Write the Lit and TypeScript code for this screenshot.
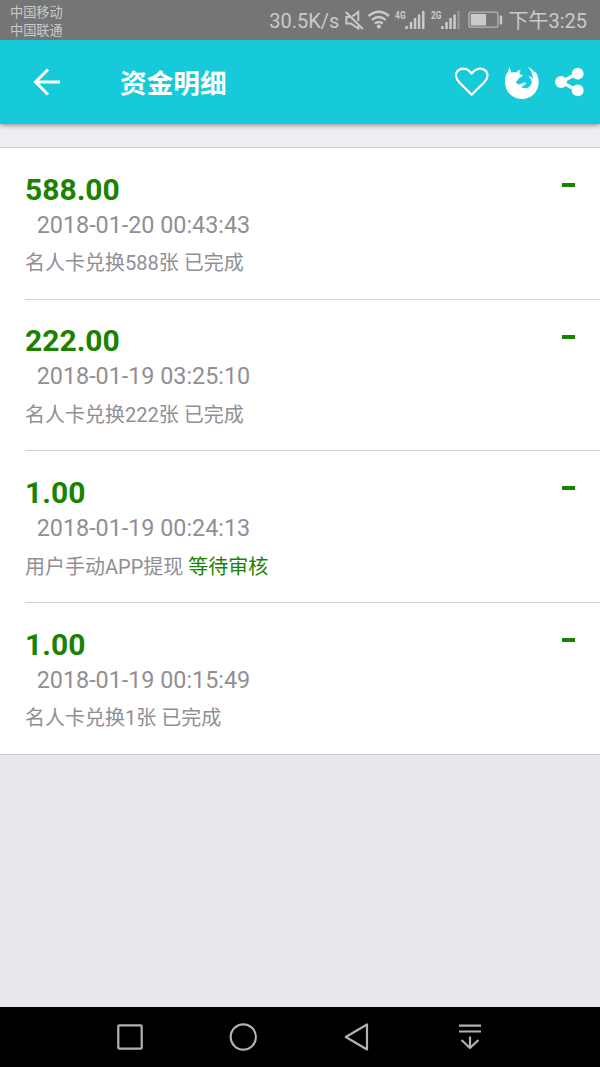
import { LitElement, html, css } from "lit";
import { customElement } from "lit/decorators.js";

interface Entry {
  amount: string;
  time: string;
  detail: string;
  status: string;
  pending?: boolean;
}

const entries: Entry[] = [
  { amount: "588.00", time: "2018-01-20 00:43:43", detail: "名人卡兑换588张", status: "已完成" },
  { amount: "222.00", time: "2018-01-19 03:25:10", detail: "名人卡兑换222张", status: "已完成" },
  { amount: "1.00", time: "2018-01-19 00:24:13", detail: "用户手动APP提现", status: "等待审核", pending: true },
  { amount: "1.00", time: "2018-01-19 00:15:49", detail: "名人卡兑换1张", status: "已完成" },
];

@customElement("app-root")
export class AppRoot extends LitElement {
  static styles = css`
    :host {
      display: flex;
      flex-direction: column;
      height: 1067px;
      width: 600px;
      overflow: hidden;
      background: #e9e8ee;
      font-family: Roboto, "Noto Sans CJK SC", sans-serif;
    }
    * { box-sizing: border-box; }
    svg { display: block; flex: none; }
    .status {
      display: flex;
      flex: none;
      height: 40px;
      padding: 0 13px 0 10px;
      background: #757575;
      color: #cacaca;
      font-size: 20px;
      z-index: 2;
    }
    .carriers { font-size: 13.2px; line-height: 18px; padding-top: 4px; flex: 1; }
    .speed, .clock { line-height: 43px; white-space: nowrap; }
    .header {
      display: flex;
      align-items: center;
      flex: none;
      height: 83.5px;
      background: #17cada;
      color: #fff;
      box-shadow: 0 1px 5px rgba(0, 0, 0, 0.45);
      z-index: 1;
    }
    .title { margin: 0 0 0 20px; padding-top: 5px; font-size: 26.67px; line-height: 40px; font-weight: 700; flex: 1; }
    .content { flex: 1; background: #e9e8ee; }
    .gap { height: 23.5px; background: #efeef3; }
    .list { background: #fff; border-top: 1px solid #c8c7cc; border-bottom: 1px solid #c8c7cc; }
    .row {
      display: flex;
      justify-content: space-between;
      height: 151.7px;
      margin-left: 25px;
      padding: 23.8px 25px 0 0;
      border-bottom: 1px solid #d0d0d3;
    }
    .row:last-child { border-bottom: 0; height: 150.9px; }
    .amount { color: #1b8200; font-size: 30px; line-height: 36px; font-weight: 700; }
    .time { color: #8f8f94; font-size: 23.33px; line-height: 35.5px; padding-left: 11.7px; }
    .detail { color: #8f8f94; font-size: 20px; line-height: 40.5px; }
    .pending { color: #1b8200; }
    .sign { width: 13px; height: 4px; margin-top: 11.2px; background: #1b8200; }
    .nav { display: flex; flex: none; height: 60px; background: #000; justify-content: center; }
  `;

  render() {
    return html`
      <div class="status">
        <div class="carriers"><div>中国移动</div><div>中国联通</div></div>
        <div class="speed">30.5K/s</div>
        <svg width="169" height="40" viewBox="339.2 0 169 40" fill="#cacaca">
          <g fill="none" stroke="#cacaca" stroke-width="1.9">
            <path d="M346 12 L363 29 M352.5 16.5 L358.5 12 V21 M350 17 H346.5 V23.5 H351 L358.5 28.5 V26" />
            <path d="M368.8 16 Q379 7.5 389.2 16 M372 20 Q379 14 386 20 M375 23.5 Q379 20.5 383 23.5" stroke-width="2.3" />
            <rect x="469.2" y="12.2" width="29" height="15" rx="2" stroke="#b5b5b5" stroke-width="1.3" />
          </g>
          <circle cx="379" cy="26.5" r="2" />
          <text x="395.3" y="19" font-size="11.5" font-weight="700" textLength="10.5" lengthAdjust="spacingAndGlyphs">4G</text>
          <path d="M405.5 26h2.5v3h-2.5z M410 22h2.5v7H410z M414 18h2.5v11H414z M418 14.5h2.5v14.5H418z M422.2 11h2.5v18h-2.5z" />
          <text x="431.2" y="19" font-size="11.5" font-weight="700" textLength="10.5" lengthAdjust="spacingAndGlyphs">2G</text>
          <path d="M441.3 26h2.5v3h-2.5z M445.5 22h2.5v7h-2.5z M449.5 18h2.5v11h-2.5z M453.5 14.5h2.5v14.5h-2.5z" />
          <path d="M457.5 11h2.3v18h-2.3z" fill="#979797" />
          <rect x="471" y="14" width="15.3" height="11.5" />
          <rect x="500" y="15.5" width="2.4" height="9" rx="1" />
        </svg>
        <div class="clock">下午3:25</div>
      </div>
      <div class="header">
        <svg width="100" height="60" viewBox="0 52 100 60" fill="none" stroke="#fff" stroke-width="3">
          <path d="M60 82 H36 M48 69.5 L35.5 82 L48 94.5" />
        </svg>
        <h1 class="title">资金明细</h1>
        <svg width="150" height="60" viewBox="450 52 150 60" fill="#fff">
          <path d="M471.7 94.7 L459.5 82.6 C455.5 78.5 454.8 73.5 458 70.6 C462 67 468 68.4 471.7 73.5 C475.5 68.4 481.5 67 485.4 70.6 C488.7 73.5 488 78.5 484 82.6 Z" fill="none" stroke="#fff" stroke-width="2.2" stroke-linejoin="round" />
          <path transform="translate(440 50) scale(.33333)" d="M211 49 C209 54 210 60 215 68 C221 65 226 66 229 68 C233 61 238 60 243 60 C238 65 238 69 240 73 L248 75 C248 80 240 83 234 86 C235 90 234 93 231 92 C226 93 228 99 234 103 C242 105 248 95 258 98 C256 104 251 108 243 111 C258 120 271 112 275 98 C276 90 270 83 265 79 C272 79 276 83 279 87 C278 74 274 61 264 51 C276 55 281 62 285 70 L286 64 C292 73 297 87 296 98 C295 126 273 147 246 147 C218 147 196 126 195 98 C194 84 198 72 203 66 L204 70 C204 62 207 54 211 49Z" />
          <path d="M577.5 73.5 L561 82 L577.5 90.5" fill="none" stroke="#fff" stroke-width="3.2" />
          <circle cx="561" cy="82" r="5.9" /><circle cx="577.7" cy="73.7" r="5.9" /><circle cx="577.7" cy="90.4" r="5.9" />
        </svg>
      </div>
      <div class="content">
        <div class="gap"></div>
        <div class="list">
          ${entries.map(
            (e) => html`<div class="row">
              <div>
                <div class="amount">${e.amount}</div>
                <div class="time">${e.time}</div>
                <div class="detail">${e.detail} <span class=${e.pending ? "pending" : ""}>${e.status}</span></div>
              </div>
              <div class="sign"></div>
            </div>`
          )}
        </div>
      </div>
      <div class="nav">
        <svg width="420" height="60" viewBox="90 1007 420 60" fill="none" stroke="#b2b2b2" stroke-width="2.2" stroke-linejoin="round">
          <rect x="118.3" y="1025.3" width="23.4" height="23.4" rx="1" />
          <circle cx="243.3" cy="1037" r="12.6" />
          <path d="M367 1024.5 V1049.5 L345.8 1037 Z" />
          <path d="M459 1025.6 H481 M459 1031.5 H481 M470 1036.5 V1048 M461.5 1040 L470 1048 L478.5 1040" />
        </svg>
      </div>
    `;
  }
}
